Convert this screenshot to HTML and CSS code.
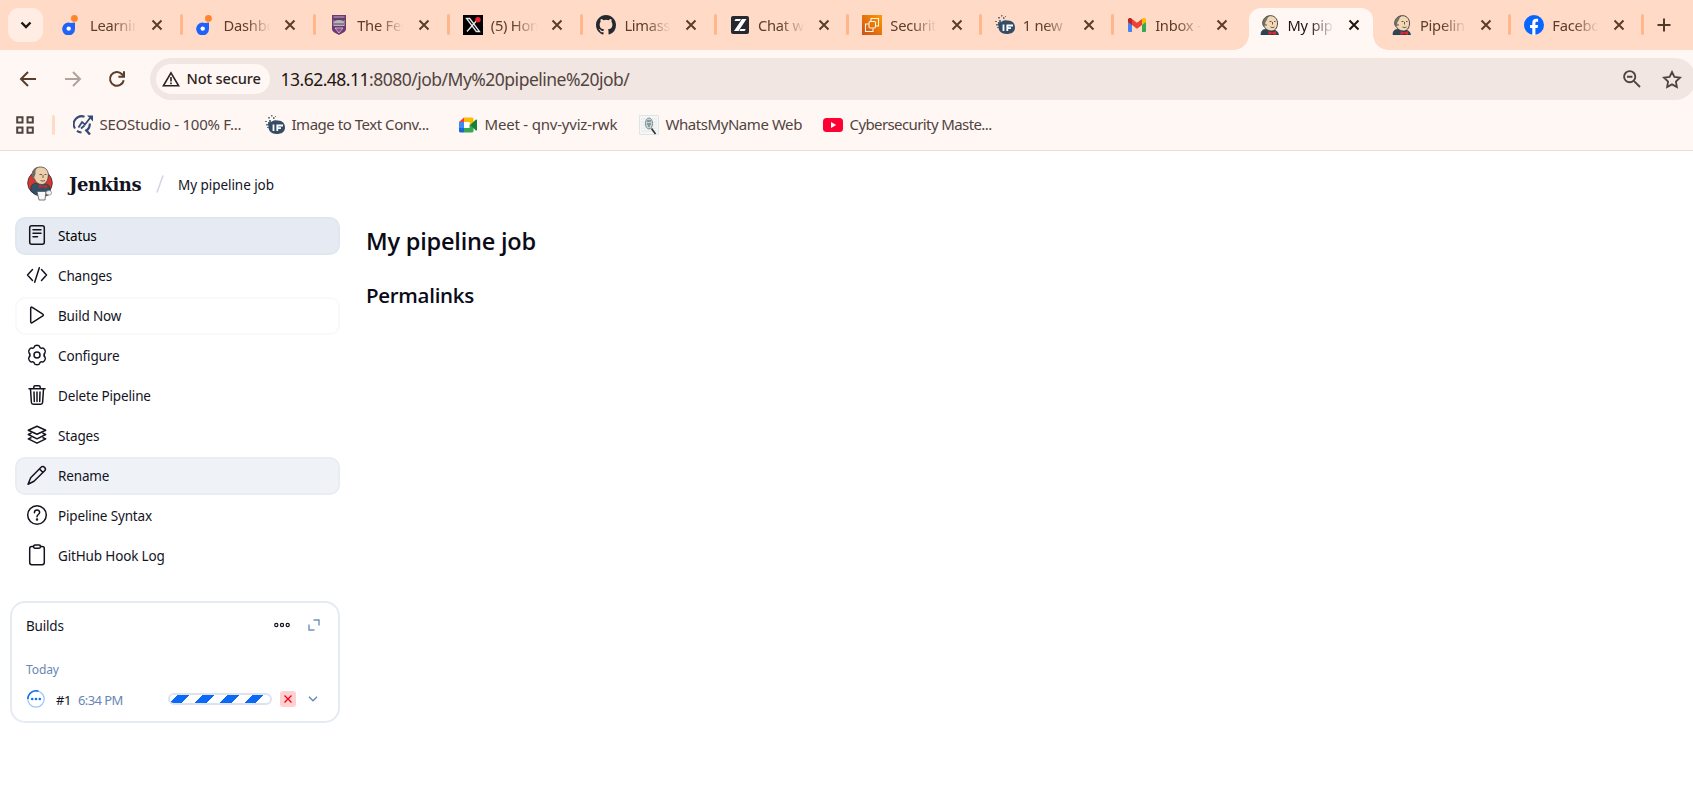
FILE: index.html
```html
<!DOCTYPE html>
<html lang="en">
<head>
<meta charset="utf-8">
<title>My pipeline job - Jenkins</title>
<link rel="stylesheet" href="styles.css">
</head>
<body>
<svg class="defs" width="0" height="0" aria-hidden="true">
  <symbol id="close" viewBox="0 0 12 12"><path d="M1.500 1.500l9 9M10.500 1.500l-9 9" fill="none" stroke="currentColor" stroke-width="2"/></symbol>
  <symbol id="dot" viewBox="0 0 20 20"><circle cx="12.400" cy="3.400" r="3.400" fill="#ff842b"/><path d="M13 7.600V14a6.400 6.400 0 1 1-4.200-6C10.600 8 12 7.800 13 7.600z" fill="#1f62f7"/><circle cx="6.700" cy="13.600" r="2.200" fill="#fff"/></symbol>
  <symbol id="butler" viewBox="0 0 20 20"><path d="M1 20c0-4 1-5 5-6l7 1c3 0 5.500 2 5.500 5z" fill="#27455b" stroke="#26343d" stroke-width=".6"/><path d="M3.500 11C1.500 7 4 2 9 .8c5-1 9 3 8.500 8.200-.3 4-2.500 7-6 7-3.500 0-6-2-7-4z" fill="#f1d9b8" stroke="#3b3833" stroke-width=".9"/><path d="M9 1C4 1.500 1.500 6 3.500 11l1.300-.5L5 7c2-1 1-3.500 4-6z" fill="#77736d" stroke="#4c4843" stroke-width=".5"/><path d="M9.500 6.500h2m2.500 0h1.500M12.500 7v2.500M10.500 12c2 .8 3 .6 4 0M6 9v2" stroke="#5c4535" stroke-width=".9" fill="none"/><path d="M8.500 16l3.500 1.500 4-1.500v4l-4-1.500L8.500 20z" fill="#e1292e"/></symbol>
  <symbol id="if" viewBox="0 0 20 20"><g fill="#64747f"><path d="M0 6h2v1H0zM3 2h2v1.500H3zM6 0h1.500v1.500H6zM4 5h2v2H4zM8 2h1.500v2H8zM1 9h3v1.500H1zM10 1h1v1h-1zM2 12h2v1H2z"/></g><path d="M3 7c4 1 5-3 9-1.500C17 5 20 8 20 12.500S16.500 19 11.500 19 3.500 16 3.500 12z" fill="#344c66"/><path d="M8.500 9.500V16M12.300 16v-5.500H18M12.300 13.200H16" fill="none" stroke="#fff" stroke-width="1.800"/></symbol>
</svg>

<header class="browser">
  <div class="tabs">
    <div class="tabsearch"><svg width="12" height="8" viewBox="0 0 12 8"><path d="M1.500 1.500L6 6l4.500-4.500" fill="none" stroke="#21160f" stroke-width="2.400"/></svg></div>
    <div class="tab wide"><svg class="fav"><use href="#dot"/></svg><span class="title">Learnin</span><svg class="x"><use href="#close"/></svg></div>
    <div class="tab wide"><svg class="fav"><use href="#dot"/></svg><span class="title">Dashbo</span><svg class="x"><use href="#close"/></svg></div>
    <div class="tab wide"><svg class="fav" viewBox="0 0 20 20"><path d="M3 0h14v14c0 3-4 4-7 6-3-2-7-3-7-6z" fill="#6b3a70"/><path d="M4.500 5h11v6h-11z" fill="#b9b3bd"/><path d="M5 6c3-2 7-2 10 0M5 9h10" stroke="#4d4851" fill="none"/><path d="M4.500 2h11M6 13h8l-4 5z" stroke="#d9c9dc" stroke-width=".8" fill="#8b4a86"/></svg><span class="title">The Fed</span><svg class="x"><use href="#close"/></svg></div>
    <div class="tab wide"><svg class="fav" viewBox="0 0 20 20"><path d="M0 0h20v20H0z"/><path d="M3.500 3.500h3.200l9.800 13h-3.200zM15.500 3.500L4 16.500" fill="none" stroke="#e8e8e8" stroke-width="1.300"/><circle cx="15" cy="4.800" r="2.700" fill="#f4212e"/></svg><span class="title">(5) Hom</span><svg class="x"><use href="#close"/></svg></div>
    <div class="tab wide"><svg class="fav" viewBox="0 0 16 16"><path fill="#24292f" d="M8 0C3.580 0 0 3.580 0 8c0 3.540 2.290 6.530 5.470 7.590.4.070.55-.17.55-.38v-1.490c-2.010.37-2.530-.49-2.690-.94-.09-.23-.48-.94-.82-1.130-.28-.15-.68-.52-.01-.53.63-.01 1.080.58 1.230.82.72 1.210 1.870.87 2.330.66.07-.52.28-.87.51-1.070-1.780-.2-3.640-.89-3.640-3.950 0-.87.31-1.590.82-2.150-.08-.2-.36-1.020.08-2.120 0 0 .67-.21 2.200.82a7.600 7.600 0 0 1 4 0c1.530-1.040 2.200-.82 2.200-.82.44 1.100.16 1.920.08 2.120.51.560.82 1.270.82 2.150 0 3.070-1.870 3.750-3.650 3.950.29.250.54.730.54 1.480v2.200c0 .21.15.46.55.38A8 8 0 0 0 16 8c0-4.420-3.580-8-8-8z"/></svg><span class="title">Limass</span><svg class="x"><use href="#close"/></svg></div>
    <div class="tab"><svg class="fav" viewBox="0 0 20 20"><rect x="1" y="1" width="18" height="18" rx="2" fill="#25282e"/><path d="M5.500 4H11L9.800 6H4.500zM12 4h4.500L8.500 16H4zM10.500 14h5.300l-1.200 2H9.300z" fill="#fff"/></svg><span class="title">Chat w</span><svg class="x"><use href="#close"/></svg></div>
    <div class="tab"><svg class="fav" viewBox="0 0 20 20"><defs><linearGradient id="aws" x1="0" y1="1" x2="1" y2="0"><stop stop-color="#c8511b"/><stop offset="1" stop-color="#f90"/></linearGradient></defs><path fill="url(#aws)" d="M0 0h20v20H0z"/><g fill="none" stroke="#fff4e4" stroke-width="1.100"><rect x="7" y="6.500" width="6.500" height="6.500" rx="1.200"/><path d="M9 6V3.500h7.500V11H14M6.500 9h-3v7.500H11V13.500"/></g></svg><span class="title">Securit</span><svg class="x"><use href="#close"/></svg></div>
    <div class="tab"><svg class="fav"><use href="#if"/></svg><span class="title">1 new</span><svg class="x"><use href="#close"/></svg></div>
    <div class="tab nosep"><svg class="fav" viewBox="0 0 20 20"><path d="M1 6l4 3v8H2a1 1 0 0 1-1-1z" fill="#4285f4"/><path d="M19 6l-4 3v8h3a1 1 0 0 0 1-1z" fill="#34a853"/><path d="M1 7V5c0-2 2-2.500 3.500-1.500L5 4v6z" fill="#c5221f"/><path d="M19 7V5c0-2-2-2.500-3.500-1.500L15 4v6z" fill="#fbbc04"/><path d="M5 4l5 3.800L15 4v6l-5 3.700L5 10z" fill="#ea4335"/></svg><span class="title">Inbox -</span><svg class="x"><use href="#close"/></svg></div>
    <div class="tab active"><svg class="fav"><use href="#butler"/></svg><span class="title">My pip</span><svg class="x"><use href="#close"/></svg></div>
    <div class="tab"><svg class="fav"><use href="#butler"/></svg><span class="title">Pipelin</span><svg class="x"><use href="#close"/></svg></div>
    <div class="tab"><svg class="fav" viewBox="0 0 20 20"><circle cx="10" cy="10" r="10" fill="#0866ff"/><path d="M8.300 20v-7H6v-3h2.300V8c0-2.800 1.500-4.200 3.900-4.200.8 0 1.500.1 1.900.2v2.700h-1.300c-1 0-1.400.5-1.400 1.500V10h2.700l-.5 3h-2.200v6.900z" fill="#fff"/></svg><span class="title">Facebo</span><svg class="x"><use href="#close"/></svg></div>
    <svg class="plus" width="14" height="14" viewBox="0 0 14 14"><path d="M7 .5v13M.5 7h13" stroke="#4f3a2c" stroke-width="2"/></svg>
  </div>

  <div class="toolbar">
    <svg class="nav" viewBox="0 0 18 18"><path d="M17 9H2.500M9 2L2 9l7 7" fill="none" stroke="#5a3d2b" stroke-width="2"/></svg>
    <svg class="nav" viewBox="0 0 18 18"><path d="M1 9h14.500M9 2l7 7-7 7" fill="none" stroke="#b1a39d" stroke-width="2"/></svg>
    <svg class="nav" viewBox="0 0 18 18"><path d="M15.700 10.200A6.900 6.900 0 1 1 14 4.200L15.500 6M16 1.200v5.600h-5.600" fill="none" stroke="#5a3d2b" stroke-width="2"/></svg>
    <div class="omnibox">
      <div class="chip"><svg width="18" height="16" viewBox="0 0 18 16"><path d="M9 1.800L16.600 14.800H1.400z" fill="none" stroke="#2b2320" stroke-width="1.600"/><path d="M9 6v4.600M9 11.500v1.700" stroke="#2b2320" stroke-width="1.600"/></svg><span>Not secure</span></div>
      <span class="url"><b>13.62.48.11</b>:8080/job/My%20pipeline%20job/</span>
      <svg class="lens" width="18" height="18" viewBox="0 0 18 18"><circle cx="6.700" cy="6.700" r="5.600" fill="none" stroke="#51443f" stroke-width="1.900"/><path d="M10.800 10.800L17 17M4 6.700h5.400" fill="none" stroke="#51443f" stroke-width="1.900"/></svg>
      <svg class="star" width="20" height="19" viewBox="0 0 20 19"><path d="M10 2l2.400 5 5.600.7-4.100 3.900 1 5.500-4.900-2.700-4.900 2.700 1-5.500L2 7.700 7.600 7z" fill="none" stroke="#51443f" stroke-width="1.800"/></svg>
    </div>
  </div>

  <div class="bookmarks">
    <svg class="apps" width="18" height="18" viewBox="0 0 18 18"><path d="M1.200 1.200h5.300v5.300H1.200zM11.500 1.200h5.300v5.300h-5.300zM1.200 11.500h5.300v5.300H1.200zM11.500 11.500h5.300v5.300h-5.300z" fill="none" stroke="#51443f" stroke-width="2"/></svg>
    <i class="bar"></i>
    <div class="bm b1"><svg viewBox="0 0 20 20"><path d="M11.500 1.700A8 8 0 0 0 2 13.500M4 15.800A8 8 0 0 0 8.500 17.500M16.800 8.500a8 8 0 0 1-3.200 7" fill="none" stroke="#354a78" stroke-width="2.100"/><path d="M5.500 12.500L9 7l3 2.500 5-6.500M8 13.500l3.500-3" fill="none" stroke="#354a78" stroke-width="1.800"/><path d="M12.500 14.500l4.500 5" stroke="#354a78" stroke-width="2.400"/><path d="M14 .5h6V6.500z" fill="#354a78"/></svg><span>SEOStudio - 100% F...</span></div>
    <div class="bm b2"><svg><use href="#if"/></svg><span>Image to Text Conv...</span></div>
    <div class="bm b3"><svg viewBox="0 0 20 20"><path d="M1 7l5-4.500V7z" fill="#ea4335"/><path d="M6 2.500h8a1.500 1.500 0 0 1 1.500 1.500v5l-4 2V7H6z" fill="#fbbc04"/><path d="M1 7h5v6H1z" fill="#4285f4"/><path d="M1 13h5v4.500H2.500A1.500 1.500 0 0 1 1 16z" fill="#1967d2"/><path d="M6 7h5.500v6H6z" fill="#fff"/><path d="M6 13h5.500v-3l4 1v5a1.500 1.500 0 0 1-1.500 1.500H6z" fill="#34a853"/><path d="M12 10l6-5.500c.5-.3 1 0 1 .5v10c0 .5-.5.800-1 .500z" fill="#188038"/></svg><span>Meet - qnv-yviz-rwk</span></div>
    <div class="bm b4"><svg viewBox="0 0 20 20"><path d="M.5.5h19v19H.5z" fill="#f5f7f6" stroke="#dde5e6"/><path d="M2 4h16M2 7h16M2 10h16M2 13h16M2 16h16" stroke="#e0e3e3" stroke-width=".8"/><ellipse cx="10" cy="8.500" rx="3.600" ry="5.500" fill="#c6d5d5" stroke="#7c8e8f"/><path d="M8 6h4M8 9h4M9 11h2" stroke="#496161"/><path d="M12.500 13.500l4 5.500" stroke="#333" stroke-width="1.700"/></svg><span>WhatsMyName Web</span></div>
    <div class="bm b5"><svg viewBox="0 0 20 20"><rect y="3" width="20" height="14" rx="3.500" fill="#ff0033"/><path d="M8 7l5.200 3L8 13z" fill="#fff"/></svg><span>Cybersecurity Maste...</span></div>
  </div>
</header>

<div class="crumbs">
  <svg class="logo" width="26" height="35" viewBox="0 0 26 35"><circle cx="13" cy="17" r="12.300" fill="#d33833" stroke="#3a2a2a" stroke-width=".8"/><path d="M4 25c-1-6 2-8 7-8l8 1c4 1 5 5 4 10-5 4-14 3-19-3z" fill="#315166" stroke="#21303b" stroke-width=".6"/><path d="M5.500 11C4 5 8 1 13.500 1c6 0 9 5 7.500 11-1 4-3 6.500-6 6.500-4 0-6.500-2.500-7.500-5.500z" fill="#edcfae" stroke="#494039" stroke-width=".8"/><path d="M12 1C6.500 1.500 4 6 5.500 11l1.800 1c0-2.500 1.500-3 1.200-5.500S9 3 12 1z" fill="#706b66"/><path d="M12.500 8.500h2.500M17.500 8.500h2M16 9v3M13.500 14.500c2 .8 3 .6 4.500 0" fill="none" stroke="#604837" stroke-width=".9"/><path d="M12 18.500l3.800 1.500 4.200-1.500v4l-4.200-1.500-3.800 1.500z" fill="#c8282f"/><path d="M10 25.500h9l-1 8.500h-6z" fill="#f7f7f7" stroke="#595959" stroke-width=".8"/><path d="M19 28c3 2 6 1 5.500-1.500C24 24 21 24 19 26z" fill="#f6eee6" stroke="#777" stroke-width=".7"/></svg>
  <span class="brand">Jenkins</span>
  <svg class="slash" width="8" height="18" viewBox="0 0 8 18"><path d="M7 .5L1 17.500" stroke="#cfd7e5" stroke-width="1.500"/></svg>
  <span class="crumb">My pipeline job</span>
</div>

<div class="page">
  <aside>
    <nav class="tasks">
      <a class="task on"><svg viewBox="0 0 22 22"><rect x="3.700" y="1.800" width="14.600" height="18.400" rx="2" fill="none"/><path d="M7 5.700h8M7 9.200h8M7 12.700h4.500"/></svg><span>Status</span></a>
      <a class="task"><svg viewBox="0 0 22 22"><path d="M6.500 5.500L1.500 11l5 5.500M15.500 5.500l5 5.500-5 5.500M13.300 3.700L8.700 18.300" fill="none"/></svg><span>Changes</span></a>
      <a class="task outlined"><svg viewBox="0 0 22 22"><path d="M4.700 4.200v13.600c0 .9.900 1.400 1.600.9l10.500-6.800c.7-.4.700-1.400 0-1.800L6.300 3.300c-.7-.5-1.600 0-1.600.900z" fill="none"/></svg><span>Build Now</span></a>
      <a class="task"><svg viewBox="0 0 22 22"><path d="M8.500 2.300c.3-1.300 4.700-1.300 5 0 .3 1.600 1.300 2.200 2.900 1.700 1.300-.5 3.800 3.300 2.700 4.400-1.300 1.500-1.300 3.700 0 5.200 1.100 1.100-1.400 4.900-2.700 4.400-1.600-.5-2.600.100-2.900 1.700-.3 1.300-4.700 1.300-5 0-.3-1.600-1.300-2.200-2.900-1.700-1.300.5-3.800-3.300-2.700-4.400 1.300-1.500 1.300-3.700 0-5.200C1.800 7.300 4.300 3.500 5.600 4c1.600.5 2.600-.1 2.900-1.700z" fill="none"/><circle cx="11" cy="11" r="3" fill="none"/></svg><span>Configure</span></a>
      <a class="task"><svg viewBox="0 0 22 22"><path d="M3 4.700h16M7.800 4.500V3c0-.8.500-1.300 1.300-1.300h3.800c.8 0 1.300.5 1.300 1.300v1.500M4.500 5l.9 13.500c.1 1 .8 1.700 1.800 1.700h7.600c1 0 1.700-.7 1.800-1.700L17.500 5M8 8l.3 9.500M11 8v9.500M14 8l-.3 9.500" fill="none"/></svg><span>Delete Pipeline</span></a>
      <a class="task"><svg viewBox="0 0 22 22"><path d="M11 2.200l8.700 4L11 10.200l-8.700-4zM5 9.300l-2.700 1.200L11 14.800l8.700-4.300L17 9.300M5 13.700l-2.700 1.200L11 19.200l8.700-4.300-2.700-1.200" fill="none"/></svg><span>Stages</span></a>
      <a class="task hover"><svg viewBox="0 0 22 22"><path d="M15.300 3c1.700-2 5.400 1.500 3.600 3.500L8 17.300l-6 2.900 2.700-6.400zM13.500 5l3.500 3.500" fill="none"/></svg><span>Rename</span></a>
      <a class="task"><svg viewBox="0 0 22 22"><circle cx="11" cy="11" r="9.300" fill="none"/><path d="M8.400 8.700c.1-3.600 5.300-3.400 5.200-.2 0 2-2.600 2-2.600 4.200" fill="none"/><circle cx="11" cy="15.400" r=".5"/></svg><span>Pipeline Syntax</span></a>
      <a class="task"><svg viewBox="0 0 22 22"><path d="M7.500 2.500H5.800c-1.200 0-2.100.9-2.100 2.100v14c0 1.200.9 2.100 2.100 2.100h10.400c1.200 0 2.100-.9 2.100-2.100v-14c0-1.200-.9-2.100-2.100-2.100h-1.700" fill="none"/><rect x="7.500" y="1" width="7" height="3.200" rx="1.400" fill="none"/></svg><span>GitHub Hook Log</span></a>
    </nav>

    <section class="builds">
      <div class="bhead">
        <span class="btitle">Builds</span>
        <svg class="more" width="16" height="6" viewBox="0 0 16 6"><g fill="none" stroke="#14141f" stroke-width="1.200"><circle cx="2.300" cy="3" r="1.600"/><circle cx="8" cy="3" r="1.600"/><circle cx="13.700" cy="3" r="1.600"/></g></svg>
        <svg width="12" height="12" viewBox="0 0 12 12"><path d="M5.500 1h5.500v5.500M1 5.500V11h5.500" fill="none" stroke="#7191bd" stroke-width="1.400"/></svg>
      </div>
      <div class="today">Today</div>
      <div class="build">
        <svg width="18" height="18" viewBox="0 0 18 18"><circle cx="9" cy="9" r="8.200" fill="none" stroke="#9fc6fb" stroke-width="1.300"/><path d="M.9 9A8.200 8.200 0 0 1 11.500 1.200" fill="none" stroke="#1270ef" stroke-width="1.600"/><g fill="#1270ef"><circle cx="5.200" cy="9" r="1.300"/><circle cx="9" cy="9" r="1.300"/><circle cx="12.800" cy="9" r="1.300"/></g></svg>
        <span class="num">#1</span>
        <span class="time">6:34 PM</span>
        <div class="progress"><i></i></div>
        <div class="stop"><svg width="8" height="8" viewBox="0 0 8 8"><path d="M.5.5l7 7M7.500.5l-7 7" stroke="#f5000c" stroke-width="1.300"/></svg></div>
        <svg class="chev" width="10" height="6" viewBox="0 0 10 6"><path d="M1 .8l4 4 4-4" fill="none" stroke="#6786b5" stroke-width="1.300"/></svg>
      </div>
    </section>
  </aside>
  <main>
    <h1>My pipeline job</h1>
    <h2>Permalinks</h2>
  </main>
</div>
</body>
</html>
```
FILE: styles.css
```css
* { box-sizing: border-box; }
body {
  margin: 0;
  width: 1693px;
  height: 809px;
  overflow: hidden;
  background: #fff;
  color: #14141f;
  font-family: "Noto Sans", "Open Sans", sans-serif;
}
svg { display: block; flex: none; }
.defs { position: absolute; }

.browser { height: 151px; background: #fff7f4; border-bottom: 1px solid #f4dbcf; }
.tabs { display: flex; align-items: center; height: 50px; background: #ffdac6; color: #5a3d2b; }
.tabsearch {
  display: flex; align-items: center; justify-content: center; flex: none;
  width: 35px; height: 34px; margin: 0 6px 0 8px;
  border-radius: 11px; background: #ffede4;
}
.tab {
  position: relative; display: flex; align-items: center; flex: none;
  width: 132.400px; height: 50px; padding-left: 13px;
}
.wide { width: 133.600px; }
.tab::after {
  content: ""; position: absolute; right: 0; top: 14px;
  width: 3px; height: 21px; border-radius: 2px; background: #ffb68a;
}
.nosep::after { display: none; }
.fav { width: 20px; height: 20px; margin-right: 8px; }
.title {
  width: 48px; white-space: nowrap;
  font-size: 14.700px; line-height: 26px; letter-spacing: -.25px;
  -webkit-mask-image: linear-gradient(90deg, #000 45%, transparent 97%);
  mask-image: linear-gradient(90deg, #000 45%, transparent 97%);
}
.x { width: 12px; height: 12px; margin-left: 12.500px; }
.plus { margin-left: 13px; }
.active { height: 42px; margin-top: 8px; padding-bottom: 8px; color: #21160f; }
.active::before {
  content: ""; position: absolute; z-index: 0; left: 2px; right: 5.500px; top: 0; bottom: 0;
  border-radius: 12px 12px 0 0; background: #fff7f4;
}
.active::after {
  left: -13px; right: -9.500px; top: auto; bottom: 0; width: auto; height: 15px; border-radius: 0;
  background:
    radial-gradient(circle at 0 0, transparent 14.500px, #fff7f4 15px) left / 15px 15px no-repeat,
    radial-gradient(circle at 100% 0, transparent 14.500px, #fff7f4 15px) right / 15px 15px no-repeat;
}
.active > * { position: relative; z-index: 1; }

.toolbar { display: flex; align-items: center; height: 58px; padding-left: 19px; }
.nav { width: 18px; height: 18px; margin-right: 26.500px; }
.omnibox {
  display: flex; align-items: center; flex: none;
  width: 1546px; height: 42px; margin-left: -3px; padding-left: 6px;
  border-radius: 21px; background: #f2e6e3;
}
.chip {
  display: flex; align-items: center; gap: 7px; flex: none;
  width: 114px; height: 30px; padding-left: 6px; margin-right: 11px;
  border-radius: 15px; background: #fff7f4; color: #2b2320;
  font: 500 14.600px/28px "Noto Sans", sans-serif; letter-spacing: -.15px; white-space: nowrap;
}
.chip span { padding-bottom: 2px; }
.url { width: 1342px; font-size: 17.500px; letter-spacing: -.510px; color: #51443f; white-space: nowrap; }
.url b { font-weight: 400; color: #21160f; }
.star { margin-left: 21px; }

.bookmarks { display: flex; align-items: center; height: 34px; padding-left: 16px; color: #51443f; }
.apps { margin-left: -.5px; }
.bar { width: 3px; height: 20px; margin: 0 18px; border-radius: 2px; background: #ffdac6; }
.bm { display: flex; align-items: center; gap: 7px; white-space: nowrap; font-size: 15px; }
.bm span { padding-bottom: 2px; }
.bm svg { width: 20px; height: 20px; }
.b1 { width: 192px; letter-spacing: -.25px; }
.b2 { width: 193px; letter-spacing: -.47px; }
.b3 { width: 181px; letter-spacing: -.2px; }
.b4 { width: 184px; letter-spacing: -.44px; }
.b5 { letter-spacing: -.6px; }

.crumbs { display: flex; align-items: center; height: 66px; padding-left: 27px; }
.logo { margin-top: -1px; }
.brand { width: 88px; margin-left: 16px; padding-top: 1px; font: 700 18px/26px "DejaVu Serif", serif; letter-spacing: -.5px; }
.slash { margin-left: -1px; }
.crumb { margin-left: 14px; padding-top: 1px; font-size: 13.500px; letter-spacing: -.05px; }

.page { display: flex; margin-top: -.5px; }
aside { width: 340px; }
.tasks { display: flex; flex-direction: column; gap: 2px; padding-left: 15px; }
.task {
  display: flex; align-items: center; gap: 10px; height: 38px; padding: 0 0 2px 9px;
  border: 2px solid transparent; border-radius: 10px; font-size: 13.500px; letter-spacing: -.15px;
}
.task svg { width: 22px; height: 22px; stroke: #14141f; stroke-width: 1.500; stroke-linecap: round; stroke-linejoin: round; }
.task span { padding-top: 2px; }
.on { background: #e6ebf3; border-color: #e1e7f0; color: #000; }
.outlined { border-color: #f9f9fa; }
.hover { background: #eff3f8; border-color: #e9edf3; }

.builds {
  height: 122px; margin: 26px 0 0 10px; padding: 11px 18px 0 14px;
  border: 2px solid #e6eaf3; border-radius: 15px;
}
.bhead { display: flex; align-items: center; height: 22px; }
.btitle { flex: 1; padding-top: 3px; font-size: 13.500px; letter-spacing: -.2px; }
.more { margin-right: 18px; }
.today { margin-top: 25px; font-size: 12px; line-height: 18px; color: #6786b5; letter-spacing: -.1px; }
.build { display: flex; align-items: center; height: 20px; margin-top: 10px; padding-left: 1px; white-space: nowrap; }
.num { width: 22px; margin-left: 11px; padding-top: 2px; font-size: 13px; letter-spacing: -.3px; }
.time { width: 90px; padding-top: 2px; font-size: 13px; letter-spacing: -.6px; color: #6786b5; }
.progress { width: 104px; height: 12px; border: 2px solid #dde3ee; border-radius: 6px; overflow: hidden; }
.progress i {
  display: block; height: 8px; width: 96px;
  background: repeating-linear-gradient(135deg, #fff 0 5.600px, #0a6af5 5.600px 13.800px, #fff 13.800px 17.500px);
}
.stop {
  display: flex; align-items: center; justify-content: center;
  width: 16px; height: 16px; margin: 0 12px 0 8px; border-radius: 3px; background: #ffd1d3;
}

main { padding: 8px 0 0 26px; color: #0b0b18; }
h1, h2 { margin: 0; font-family: "Open Sans", "Noto Sans", sans-serif; font-weight: 600; white-space: nowrap; }
h1 { font-size: 23.500px; line-height: 32px; letter-spacing: -.2px; }
h2 { margin-top: 24px; font-size: 20.500px; line-height: 28px; letter-spacing: -.3px; }
```
